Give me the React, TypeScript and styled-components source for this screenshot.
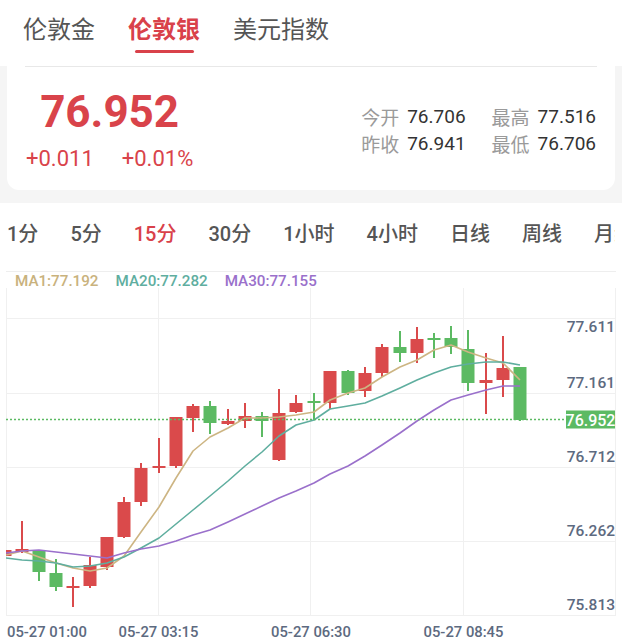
import React from "react";
import styled, { createGlobalStyle } from "styled-components";

const GlobalStyle = createGlobalStyle`
  html, body { margin: 0; padding: 0; }
  body {
    background: #f5f5f5;
    font-family: Roboto, "Noto Sans CJK SC", sans-serif;
    width: 622px;
    height: 642px;
    overflow: hidden;
  }
  #root { width: 622px; }
`;

const Page = styled.div`
  width: 622px;
  display: flex;
  flex-direction: column;
`;

const Header = styled.div`
  height: 66px;
  background: #fff;
  display: flex;
  gap: 33px;
  padding-left: 23px;
`;

const Tab = styled.div<{ $active?: boolean }>`
  position: relative;
  padding-top: 12px;
  font-size: 24px;
  line-height: 32px;
  font-family: "Noto Sans CJK SC", sans-serif;
  color: ${(p) => (p.$active ? "#d9414a" : "#555")};
  font-weight: ${(p) => (p.$active ? 700 : 400)};
  &::after {
    content: "";
    display: ${(p) => (p.$active ? "block" : "none")};
    position: absolute;
    left: 50%;
    top: 50px;
    width: 59px;
    height: 3px;
    margin-left: -29.5px;
    border-radius: 2px;
    background: #d9414a;
  }
`;

const Card = styled.div`
  margin: 0 7px;
  height: 124px;
  background: #fff;
  border-radius: 0 0 12px 12px;
  display: flex;
  flex-direction: column;
`;

const Divider = styled.div`
  height: 1px;
  margin: 0 18px;
  background: #e8e8e8;
`;

const CardBody = styled.div`
  flex: 1;
  display: flex;
  align-items: center;
  justify-content: space-between;
  padding: 0 19px;
`;

const PriceCol = styled.div`
  display: flex;
  flex-direction: column;
  align-items: center;
  gap: 6px;
`;

const Price = styled.div`
  font-size: 44px;
  line-height: 54px;
  font-weight: 700;
  color: #d9434a;
`;

const Changes = styled.div`
  display: flex;
  gap: 28px;
  font-size: 22px;
  line-height: 28px;
  color: #d9434a;
`;

const Stats = styled.div`
  display: grid;
  grid-template-columns: auto auto;
  column-gap: 26px;
  row-gap: 4px;
  margin-top: 3px;
`;

const Stat = styled.div`
  display: flex;
  gap: 8px;
  font-size: 19px;
  line-height: 23px;
`;

const StatLabel = styled.span`
  color: #9a9a9a;
  font-family: "Noto Sans CJK SC", sans-serif;
`;

const StatValue = styled.span`
  color: #333;
`;

const ChartSection = styled.div`
  margin-top: 13px;
  background: #fff;
  display: flex;
  flex-direction: column;
`;

const Periods = styled.div`
  height: 59px;
  margin-right: 7px;
  display: flex;
  align-items: center;
  gap: 32px;
  padding-left: 7px;
  white-space: nowrap;
  overflow: hidden;
`;

const Period = styled.div<{ $active?: boolean }>`
  font-size: 20px;
  font-weight: 500;
  color: ${(p) => (p.$active ? "#d9414a" : "#555")};
  flex-shrink: 0;
`;

const ChartWrap = styled.div`
  position: relative;
  height: 380px;
`;

const Legend = styled.div`
  position: absolute;
  top: 10px;
  left: 15px;
  display: flex;
  gap: 17px;
  font-size: 15.2px;
  line-height: 18px;
  font-weight: 500;
`;

const LegendItem = styled.span<{ $color: string }>`
  color: ${(p) => p.$color};
`;

const RED = "#da4a4b";
const GREEN = "#5cba63";

type C = [number, number, number, number, number, "r" | "g"];
const candles: C[] = [
  [5, 550, 556, 550, 556, "r"],
  [22, 549, 552, 521, 553, "r"],
  [39, 551, 572, 550, 581, "g"],
  [56, 573, 587, 559, 591, "g"],
  [73, 586, 588, 577, 607, "r"],
  [90, 565, 586, 557, 588, "r"],
  [107, 537, 567, 537, 570, "r"],
  [124, 502, 537, 497, 538, "r"],
  [141, 468, 502, 463, 506, "r"],
  [159, 466, 468, 438, 473, "r"],
  [176, 417, 466, 417, 468, "r"],
  [193, 406, 418, 404, 432, "r"],
  [210, 406, 423, 401, 434, "g"],
  [228, 421, 424, 409, 425, "r"],
  [245, 416, 421, 403, 428, "r"],
  [262, 416, 421, 412, 437, "g"],
  [279, 413, 460, 389, 461, "r"],
  [296, 403, 412, 395, 413, "r"],
  [314, 401, 403, 393, 420, "g"],
  [330, 371, 403, 371, 409, "r"],
  [348, 371, 393, 370, 395, "g"],
  [365, 373, 391, 367, 397, "r"],
  [382, 347, 373, 344, 377, "r"],
  [400, 347, 353, 331, 362, "g"],
  [417, 339, 353, 327, 363, "r"],
  [434, 338, 340, 333, 358, "g"],
  [451, 338, 347, 326, 354, "g"],
  [468, 349, 383, 330, 391, "g"],
  [486, 380, 383, 353, 414, "r"],
  [503, 368, 380, 336, 397, "r"],
  [520, 367, 420, 367, 421, "g"],
];

const ma1 =
  "6,555 22,551 39,557 56,563 73,568 90,571 107,568 124,556 141,532 159,507 176,478 193,451 210,437 228,428 245,418 262,418 279,417 296,415 314,412 330,400 348,393 365,388 382,377 400,367 417,360 434,350 451,345 468,352 486,358 503,363 520,380";
const ma20 =
  "6,558 22,560 39,561 56,563 73,567 90,566 107,563 124,557 141,548 159,538 176,524 193,510 210,496 228,481 245,466 262,452 279,436 296,425 314,420 330,409 348,406 365,403 382,396 400,388 417,380 434,373 451,367 468,364 486,362 503,362 520,365";
const ma30 =
  "6,553 22,551 39,550 56,552 73,554 90,556 107,558 124,553 141,549 159,546 176,541 193,535 210,530 228,522 245,514 262,506 279,498 296,491 314,483 330,474 348,466 365,456 382,445 400,433 417,421 434,410 451,400 468,395 486,390 503,386 520,386";

const AXIS = "#5d6a80";

function Chart() {
  const hLines = [318, 393, 467, 541, 615];
  const vLines = [6, 158, 310, 463, 615];
  const yLabels: [string, number][] = [
    ["77.611", 332],
    ["77.161", 388],
    ["76.712", 462],
    ["76.262", 536],
    ["75.813", 610],
  ];
  const xLabels: [string, number, "start" | "middle"][] = [
    ["05-27 01:00", 7, "start"],
    ["05-27 03:15", 158.5, "middle"],
    ["05-27 06:30", 311, "middle"],
    ["05-27 08:45", 463.5, "middle"],
  ];
  return (
    <svg width={622} height={380} viewBox="0 262 622 380" style={{ display: "block" }}>
      <defs>
        <clipPath id="pane">
          <rect x={6} y={288} width={609} height={327} />
        </clipPath>
      </defs>
      <line x1={6} y1={271.5} x2={616} y2={271.5} stroke="#eeeeee" strokeWidth={1} />
      {vLines.map((x) => (
        <line key={"v" + x} x1={x + 0.5} y1={288} x2={x + 0.5} y2={615} stroke="#f0f0f0" strokeWidth={1} />
      ))}
      {hLines.map((y) => (
        <line key={"h" + y} x1={6} y1={y + 0.5} x2={616} y2={y + 0.5} stroke="#f0f0f0" strokeWidth={1} />
      ))}
      <g clipPath="url(#pane)">
        {candles.map(([cx, bt, bb, wt, wb, c], i) => {
          const col = c === "r" ? RED : GREEN;
          const h = Math.max(bb - bt, 2);
          return (
            <g key={i}>
              <line x1={cx} y1={wt} x2={cx} y2={wb} stroke={col} strokeWidth={2} />
              <rect x={cx - 6.5} y={bt} width={13} height={h} fill={col} />
            </g>
          );
        })}
        <polyline points={ma1} fill="none" stroke="#cdb583" strokeWidth={1.6} strokeLinejoin="round" />
        <polyline points={ma20} fill="none" stroke="#5fae9f" strokeWidth={1.6} strokeLinejoin="round" />
        <polyline points={ma30} fill="none" stroke="#9a70cb" strokeWidth={1.6} strokeLinejoin="round" />
      </g>
      <line x1={6} y1={419.5} x2={566} y2={419.5} stroke="#5cba63" strokeWidth={1.3} strokeDasharray="2 2" />
      {yLabels.map(([t, y]) => (
        <text key={t} x={615} y={y} textAnchor="end" fontFamily="Roboto, sans-serif" fontSize={15.5} fontWeight={500} fill={AXIS}>
          {t}
        </text>
      ))}
      <rect x={566} y={410.5} width={49} height={18} fill="#5cba63" />
      <text x={590.5} y={425.5} textAnchor="middle" fontFamily="Roboto, sans-serif" fontSize={16} fontWeight={500} fill="#fff">
        76.952
      </text>
      {xLabels.map(([t, x, a]) => (
        <text key={t} x={x} y={637} textAnchor={a} fontFamily="Roboto, sans-serif" fontSize={14.8} fontWeight={500} fill={AXIS}>
          {t}
        </text>
      ))}
    </svg>
  );
}

export default function App() {
  const periods = ["1分", "5分", "15分", "30分", "1小时", "4小时", "日线", "周线", "月线"];
  return (
    <>
      <GlobalStyle />
      <Page>
        <Header>
          <Tab>伦敦金</Tab>
          <Tab $active>伦敦银</Tab>
          <Tab>美元指数</Tab>
        </Header>
        <Card>
          <Divider />
          <CardBody>
            <PriceCol>
              <Price>76.952</Price>
              <Changes>
                <span>+0.011</span>
                <span>+0.01%</span>
              </Changes>
            </PriceCol>
            <Stats>
              <Stat>
                <StatLabel>今开</StatLabel>
                <StatValue>76.706</StatValue>
              </Stat>
              <Stat>
                <StatLabel>最高</StatLabel>
                <StatValue>77.516</StatValue>
              </Stat>
              <Stat>
                <StatLabel>昨收</StatLabel>
                <StatValue>76.941</StatValue>
              </Stat>
              <Stat>
                <StatLabel>最低</StatLabel>
                <StatValue>76.706</StatValue>
              </Stat>
            </Stats>
          </CardBody>
        </Card>
        <ChartSection>
          <Periods>
            {periods.map((p) => (
              <Period key={p} $active={p === "15分"}>
                {p}
              </Period>
            ))}
          </Periods>
          <ChartWrap>
            <Chart />
            <Legend>
              <LegendItem $color="#c9b27d">MA1:77.192</LegendItem>
              <LegendItem $color="#5fae9f">MA20:77.282</LegendItem>
              <LegendItem $color="#9a70cb">MA30:77.155</LegendItem>
            </Legend>
          </ChartWrap>
        </ChartSection>
      </Page>
    </>
  );
}
